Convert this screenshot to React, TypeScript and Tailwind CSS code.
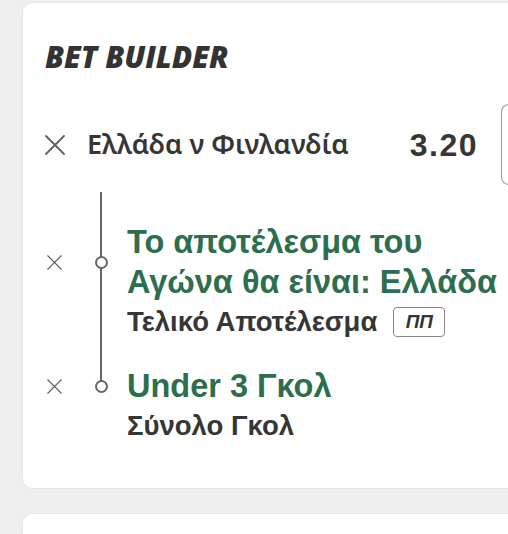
const sans = "font-['Liberation_Sans',Arial,sans-serif]"

function Cross({ size, stroke }: { size: number; stroke: number }) {
  return (
    <svg width={size} height={size} viewBox="0 0 20 20" fill="none" stroke="#5f5f5f" strokeWidth={stroke} strokeLinecap="round">
      <path d="M1 1L19 19M19 1L1 19" />
    </svg>
  )
}

function Selection({ title, market, badge }: { title: string[]; market: string; badge?: string }) {
  return (
    <div className="flex flex-col">
      <div className="flex items-center">
        <div className="w-[56px] flex pl-[2px]">
          <Cross size={15} stroke={1.5} />
        </div>
        <div className="w-[26px] flex">
          <div className="w-[13px] h-[13px] rounded-full border-2 border-[#666] bg-white -ml-[6px] relative z-10" />
        </div>
        <div className={`${sans} text-[32.5px] leading-[40px] font-bold text-[#2d6e4e]`}>
          {title.map((t) => (
            <div key={t} className="whitespace-nowrap">{t}</div>
          ))}
        </div>
      </div>
      <div className="flex items-center gap-[16px] pl-[82px]">
        <span className={`${sans} text-[27.5px] leading-[40px] font-bold text-[#363636]`}>{market}</span>
        {badge && (
          <span className="border-[1.5px] border-[#888] rounded-[4px] w-[52px] h-[30px] flex items-center justify-center font-['Liberation_Sans',sans-serif] italic font-bold text-[19px] text-[#333]">
            {badge}
          </span>
        )}
      </div>
    </div>
  )
}

export default function App() {
  return (
    <div className="w-[508px] h-[534px] overflow-hidden bg-[#efefef] pl-[22px] pt-[2px] flex flex-col gap-[24px]">
      <div className="w-[520px] h-[487px] shrink-0 bg-white rounded-l-[10px] border border-r-0 border-[#e6e6e6] pl-[22px] pt-[35px]">
        <h1 className="font-['Open_Sans',sans-serif] italic font-extrabold text-[30px] leading-[38px] text-[#333]">
          BET BUILDER
        </h1>

        <div className="mt-[28px] h-[81px] flex items-center">
          <Cross size={20} stroke={1.8} />
          <span className="ml-[22px] font-['Noto_Sans',sans-serif] font-semibold text-[27px] text-[#363636]">
            Ελλάδα ν Φινλανδία
          </span>
          <span className={`ml-auto mr-[23px] ${sans} font-bold text-[32px] tracking-[1.5px] text-[#363636]`}>3.20</span>
          <div className="w-[41px] h-[81px] border-[1.5px] border-[#999] rounded-l-[8px] border-r-0" />
        </div>

        <div className="relative mt-[7px] pt-[30px] flex flex-col gap-[24px]">
          <div className="absolute left-[55px] top-0 h-[194px] w-[2px] bg-[#666]" />
          <Selection title={["Το αποτέλεσμα του", "Αγώνα θα είναι: Ελλάδα"]} market="Τελικό Αποτέλεσμα" badge="ΠΠ" />
          <Selection title={["Under 3 Γκολ"]} market="Σύνολο Γκολ" />
        </div>
      </div>
      <div className="w-[520px] h-[60px] shrink-0 bg-white rounded-l-[10px] border border-r-0 border-[#e6e6e6]" />
    </div>
  )
}
